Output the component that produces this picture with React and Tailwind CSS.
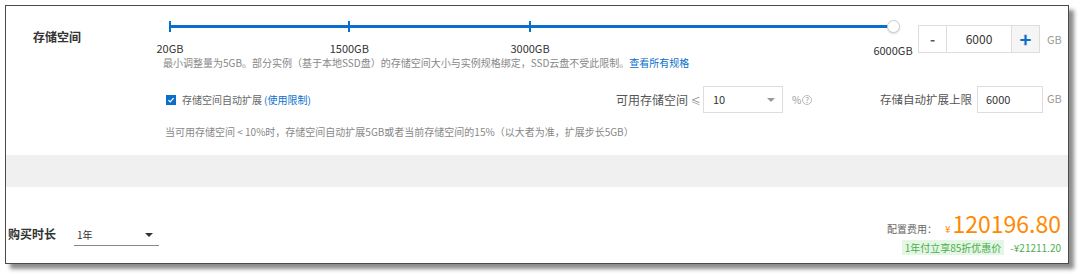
import React from "react";

const font = { fontFamily: '"Noto Sans CJK SC", "Liberation Sans", sans-serif' };

/* ---------- slider (drawing) ---------- */
function StorageSlider() {
  const marks = [
    { left: "left-[0%]", label: "20GB" },
    { left: "left-[24.8%]", label: "1500GB" },
    { left: "left-[49.8%]", label: "3000GB" },
  ];
  return (
    <div className="relative w-[753px] h-[50px]">
      <div className="absolute top-[19px] left-[11px] right-[19px] h-[3px]">
        <div className="absolute inset-0 bg-[#0a6fcb]" />
        {marks.map((m) => (
          <div key={m.label} className={`absolute ${m.left} -top-[4px] h-[11px] w-[2px] -ml-[1px] bg-[#0a6fcb]`} />
        ))}
        {marks.map((m) => (
          <div key={m.label + "l"} className={`absolute ${m.left} top-[16px] w-0 flex justify-center`}>
            <span className="text-[11px] leading-[14px] text-[#333] whitespace-nowrap">{m.label}</span>
          </div>
        ))}
        <div className="absolute left-full top-[16px] w-0 flex justify-center">
          <span className="text-[11px] leading-[14px] text-[#333] whitespace-nowrap pt-[2px]">6000GB</span>
        </div>
        <div className="absolute left-full -top-[5px] -ml-[6px] h-[13px] w-[13px] rounded-full border border-[#ccc] bg-white shadow-[0_1px_2px_rgba(0,0,0,0.15)]" />
      </div>
    </div>
  );
}

export default function App() {
  return (
    <div className="w-[1080px] h-[274px] bg-white overflow-hidden pt-[5px] pl-[5px]" style={font}>
      <div className="w-[1064px] h-[259px] border border-[#4a4a4a] bg-white shadow-[5px_5px_4px_rgba(0,0,0,0.45)] flex flex-col">
        {/* STORAGE */}
        <div className="h-[149px] flex">
          <div className="w-[153px] pl-[27px] pt-[22px] text-[12px] leading-[18px] font-bold text-[#333]">存储空间</div>

          <div className="flex-1 flex flex-col">
            <div className="flex">
              <StorageSlider />
              <div className="ml-[6px] mt-[19px] flex h-[28px] w-[122px] border border-[#ddd] text-[12px]">
                <div className="w-[28px] flex items-center justify-center border-r border-[#ddd] text-[#555] font-bold text-[14px]">-</div>
                <div className="flex-1 flex items-center justify-center text-[#333]">6000</div>
                <div className="w-[28px] flex items-center justify-center border-l border-[#ddd] bg-[#f5f5f5] text-[#0a6fcb] font-bold text-[20px] leading-none">+</div>
              </div>
              <div className="ml-[7px] mt-[26px] text-[11px] leading-[14px] text-[#999]">GB</div>
            </div>

            <div className="pl-[4px] text-[10px] leading-[14px] text-[#888] whitespace-nowrap">
              最小调整量为5GB。部分实例（基于本地SSD盘）的存储空间大小与实例规格绑定，SSD云盘不受此限制。
              <span className="text-[#0a6fcb]">查看所有规格</span>
            </div>

            <div className="mt-[16px] flex items-center h-[27px]">
              <div className="w-[457px] pl-[7px] flex items-center">
                <span className="h-[10px] w-[10px] bg-[#0a6fcb] flex items-center justify-center">
                  <svg viewBox="0 0 10 10" className="h-[8px] w-[8px]">
                    <path d="M1.8 5.2 L4 7.3 L8.2 2.6" fill="none" stroke="white" strokeWidth="1.6" />
                  </svg>
                </span>
                <span className="ml-[6px] text-[10px] text-[#666]">存储空间自动扩展</span>
                <span className="ml-[2px] text-[10px] text-[#0a6fcb]">(使用限制)</span>
              </div>
              <div className="w-[87px] text-[12px] text-[#555] whitespace-nowrap">
                可用存储空间 <span className="text-[10px] text-[#888]">≤</span>
              </div>
              <div className="w-[80px] h-[27px] border border-[#ddd] flex items-center justify-between pl-[9px] pr-[7px]">
                <span className="text-[11px] text-[#333]">10</span>
                <span className="h-0 w-0 border-l-[4px] border-r-[4px] border-t-[4px] border-l-transparent border-r-transparent border-t-[#999]" />
              </div>
              <div className="w-[97px] pl-[9px] flex items-center text-[10px] text-[#999]">
                %
                <span className="ml-[1px] h-[10px] w-[10px] rounded-full border border-[#bbb] flex items-center justify-center text-[8px] leading-none">?</span>
              </div>
              <div className="w-[97px] text-[11.5px] text-[#555] whitespace-nowrap">存储自动扩展上限</div>
              <div className="w-[66px] h-[27px] border border-[#ddd] flex items-center pl-[8px] text-[11px] text-[#333]">6000</div>
              <div className="ml-[4px] -mt-[3px] text-[11px] text-[#999]">GB</div>
            </div>

            <div className="mt-[12px] pl-[6px] text-[10px] leading-[14px] text-[#888] whitespace-nowrap">
              当可用存储空间 &lt; 10%时，存储空间自动扩展5GB或者当前存储空间的15%（以大者为准，扩展步长5GB）
            </div>
          </div>
        </div>

        <div className="h-[32px] bg-[#f0f0f0]" />

        {/* DURATION & PRICE */}
        <div className="flex-1 flex justify-between">
          <div className="flex items-start pt-[38px] pl-[2px]">
            <div className="text-[12px] leading-[18px] font-bold text-[#333]">购买时长</div>
            <div className="ml-[18px] mt-[-1px] w-[85px] h-[22px] border-b border-[#888] flex items-center justify-between pl-[3px] pr-[6px]">
              <span className="text-[10px] text-[#333]">1年</span>
              <span className="h-0 w-0 border-l-[4px] border-r-[4px] border-t-[4px] border-l-transparent border-r-transparent border-t-[#333]" />
            </div>
          </div>

          <div className="flex flex-col items-end justify-end pb-[8px] pr-[7px]">
            <div className="flex items-baseline">
              <span className="text-[10px] text-[#666]">配置费用：</span>
              <span className="ml-[8px] text-[10px] text-[#ff8a00]">¥</span>
              <span className="ml-[2px] text-[23px] leading-[28px] text-[#ff8a00]">120196.80</span>
            </div>
            <div className="mt-[3px] flex items-center">
              <span className="bg-[#e4f6e4] px-[3px] h-[15px] flex items-center text-[10px] text-[#4cae4c]">1年付立享85折优惠价</span>
              <span className="ml-[6px] text-[10px] text-[#4cae4c]">-¥21211.20</span>
            </div>
          </div>
        </div>
      </div>
    </div>
  );
}
